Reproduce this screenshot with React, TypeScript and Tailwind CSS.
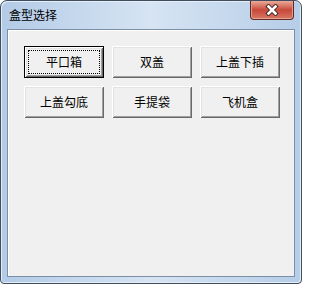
import { useState } from 'react';

const boxTypes = ['平口箱', '双盖', '上盖下插', '上盖勾底', '手提袋', '飞机盒'];

const font = { fontFamily: '"SimSun", "Noto Sans CJK SC", "Liberation Sans", sans-serif' };

function CloseButton() {
  return (
    <button className="absolute top-0 right-[7px] w-[44px] h-[19px] flex items-center justify-center rounded-b-[4px] border border-t-0 border-[#5e2a24] bg-linear-to-b from-[#e9a99b] via-[#c8483a] to-[#d77766] shadow-[inset_0_-1px_#eaa392,inset_1px_0_#e49a8a,inset_-1px_0_#e49a8a]">
      <svg width="14" height="12" viewBox="0 0 14 12">
        <path d="M3.5 2.5 L10.5 9.5 M10.5 2.5 L3.5 9.5" stroke="#4a2a28" strokeWidth="4.5" strokeLinecap="square" />
        <path d="M3.5 2.5 L10.5 9.5 M10.5 2.5 L3.5 9.5" stroke="#ffffff" strokeWidth="2.5" strokeLinecap="square" />
      </svg>
    </button>
  );
}

function BoxButton({ label, active, onClick }: { label: string; active: boolean; onClick: () => void }) {
  if (active) {
    return (
      <button
        onClick={onClick}
        className="relative h-[32px] bg-[#f0f0f0] border border-black text-[12px] text-black shadow-[inset_1px_1px_#ffffff,inset_-1px_-1px_#696969,inset_2px_2px_#e3e3e3,inset_-2px_-2px_#a0a0a0]"
        style={font}
      >
        <span className="absolute inset-[3px] border border-dotted border-black" />
        <span className="relative">{label}</span>
      </button>
    );
  }
  return (
    <button
      onClick={onClick}
      className="h-[32px] bg-[#f0f0f0] text-[12px] text-black shadow-[inset_1px_1px_#ffffff,inset_-1px_-1px_#696969,inset_2px_2px_#e3e3e3,inset_-2px_-2px_#a0a0a0]"
      style={font}
    >
      {label}
    </button>
  );
}

export default function App() {
  const [selected, setSelected] = useState(0);

  return (
    <div className="relative w-[302px] h-[284px] flex flex-col rounded-t-[7px] rounded-b-[4px] border border-[#3f4d5c] bg-linear-to-r from-[#b3cbe7] via-[#d6e4f3] to-[#b6cde8] shadow-[inset_1px_1px_#e6eef8,inset_-1px_-1px_#e6eef8] overflow-hidden">
      <div className="h-[28px] shrink-0 flex items-center pl-[8px] pb-[1px]">
        <span className="text-[12px] leading-none text-black" style={font}>
          盒型选择
        </span>
      </div>
      <CloseButton />
      <div className="flex-1 mx-[6px] mb-[6px] border border-[#7d8fa6] bg-[#f0f0f0] shadow-[inset_1px_1px_#ffffff]">
        <div className="grid grid-cols-[80px_80px_80px] auto-rows-[32px] gap-[8px] pl-[16px] pt-[16px]">
          {boxTypes.map((t, i) => (
            <BoxButton key={t} label={t} active={i === selected} onClick={() => setSelected(i)} />
          ))}
        </div>
      </div>
    </div>
  );
}
